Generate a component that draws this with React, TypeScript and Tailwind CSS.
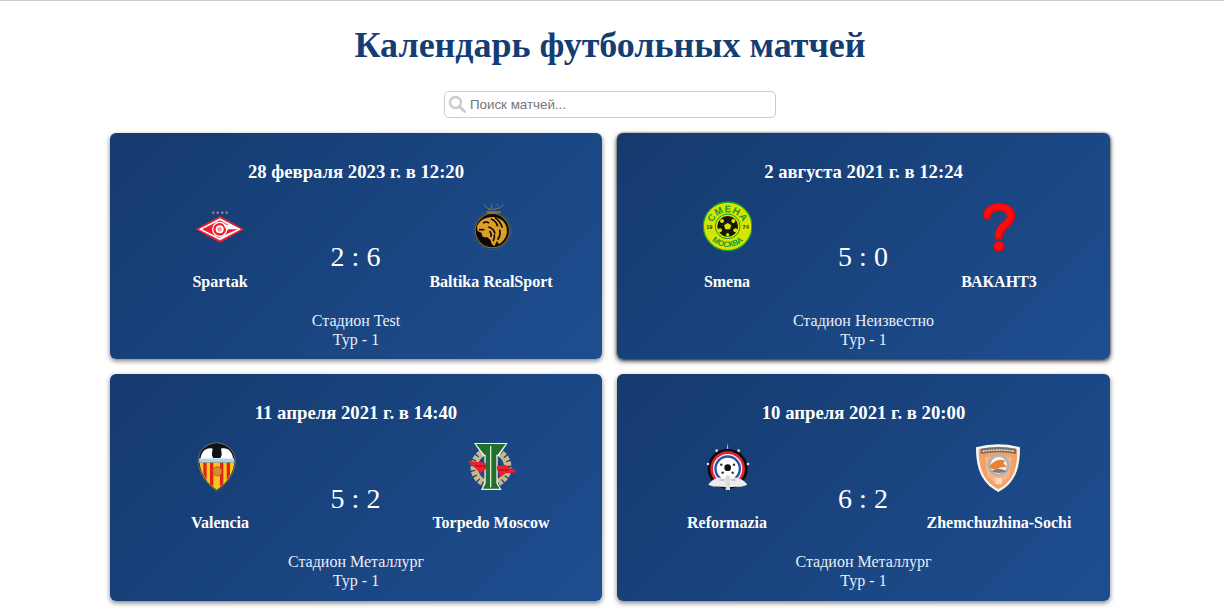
import { ReactNode } from "react";

const SpartakLogo = () => (
  <svg viewBox="45 18 150 150" className="w-[50px] h-[50px]">
    <g fill="#a89a80">
      <rect x="97" y="50" width="6" height="6" />
      <rect x="110" y="50" width="6" height="6" />
      <rect x="124" y="50" width="6" height="6" />
      <rect x="137" y="50" width="6" height="6" />
    </g>
    <polygon points="47,103 120,63 192,103 120,143" fill="#ee1c2e" />
    <polygon points="56,103 120,70 183,103 120,136" fill="#fff" />
    <polygon points="66,103 120,76 146,90 120,96 100,103 120,128 120,130" fill="#ee1c2e" />
    <polygon points="120,128 142,116 174,103 146,103 132,112" fill="#ee1c2e" />
    <circle cx="119" cy="103" r="23" fill="#fff" />
    <circle cx="119" cy="103" r="19" fill="#ee1c2e" />
    <circle cx="119" cy="103" r="12" fill="#fff" />
    <circle cx="119" cy="103" r="7" fill="#f39aa2" />
    <polygon points="128 84 172 103 136 100" fill="#fff" />
  </svg>
);

const BalticaLogo = () => (
  <svg viewBox="33 18 150 150" className="w-[50px] h-[50px]">
    <g fill="none" stroke="#a9812c" strokeWidth="2">
      <path d="M88 28 q4 12 16 14 M104 42 l6 -6 6 6 M110 36 v-10" />
      <path d="M120 42 q14 0 28 -14 M128 34 v-8" />
      <path d="M100 44 h24" />
    </g>
    <rect x="95" y="49" width="42" height="6" fill="#8f7a45" />
    <circle cx="112" cy="107" r="57" fill="none" stroke="#8f7430" strokeWidth="2" strokeDasharray="2 3" />
    <circle cx="112" cy="107" r="52" fill="#a87d25" />
    <circle cx="112" cy="107" r="50" fill="#0b0906" />
    <path
      d="M66 96 q4 -20 30 -28 q30 -8 50 12 q14 18 8 40 q-6 18 -22 28 l-6 -10 l-8 16 l-8 -8 l-4 -12 l-10 -8 q-8 2 -14 -2 l-2 -10 l-12 -6 z"
      fill="#dc9f27"
    />
    <g stroke="#0b0906" fill="none" strokeWidth="5">
      <path d="M84 84 q10 -6 18 0" />
      <path d="M108 72 q16 6 20 22 M120 68 q16 10 22 30 M100 96 q16 4 20 20" />
      <path d="M134 104 q4 16 -6 30 M118 118 q2 10 -4 20 M104 108 q6 8 4 18" />
      <path d="M72 104 h16" />
    </g>
  </svg>
);

const SmenaLogo = () => (
  <svg viewBox="36 18 150 150" className="w-[50px] h-[50px]">
    <defs>
      <path id="smena-top" d="M65 100 a48 48 0 0 1 96 0" />
      <path id="smena-bottom" d="M45 88 a68 68 0 0 0 136 0" />
    </defs>
    <circle cx="113" cy="94" r="73" fill="#d8e400" stroke="#149a38" strokeWidth="4" />
    <circle cx="113" cy="94" r="37" fill="#d8e400" stroke="#149a38" strokeWidth="3" />
    <text fontFamily="Liberation Sans, sans-serif" fontSize="29" fontWeight="700" fill="#149a38" textAnchor="middle" letterSpacing="2">
      <textPath href="#smena-top" startOffset="50%">СМЕНА</textPath>
    </text>
    <text fontFamily="Liberation Sans, sans-serif" fontSize="24" fontWeight="700" fill="#149a38" textAnchor="middle">
      <textPath href="#smena-bottom" startOffset="50%">МОСКВА</textPath>
    </text>
    <text x="58" y="102" fontFamily="Liberation Sans, sans-serif" fontSize="17" fontWeight="700" fill="#214a14" textAnchor="middle">19</text>
    <text x="167" y="102" fontFamily="Liberation Sans, sans-serif" fontSize="17" fontWeight="700" fill="#214a14" textAnchor="middle">74</text>
    <circle cx="113" cy="94" r="31" fill="#16160a" />
    <g fill="#d8e400">
      <polygon points="113,84 124,91 120,103 106,103 102,91" />
      <circle cx="96" cy="78" r="6" />
      <circle cx="130" cy="78" r="6" />
      <circle cx="90" cy="106" r="6" />
      <circle cx="136" cy="106" r="6" />
      <circle cx="113" cy="119" r="5" />
    </g>
  </svg>
);

const QuestionLogo = () => (
  <svg viewBox="42 18 150 150" className="w-[50px] h-[50px]">
    <path
      d="M81 62 C84 44 100 37 117 37 C140 37 153 48 153 63 C153 80 138 88 128 98 C121 106 117 114 116 124"
      fill="none"
      stroke="#d80808"
      strokeWidth="25"
      strokeLinecap="round"
    />
    <path
      d="M81 60 C84 43 100 35 117 35 C140 35 151 47 151 62 C151 78 136 86 126 96 C119 104 115 112 114 122"
      fill="none"
      stroke="#fb0d0d"
      strokeWidth="18"
      strokeLinecap="round"
    />
    <circle cx="117" cy="155" r="17" fill="#d80808" />
    <circle cx="116" cy="153" r="13" fill="#fb0d0d" />
  </svg>
);

const ValenciaLogo = () => (
  <svg viewBox="45 18 150 150" className="w-[50px] h-[50px]">
    <path d="M110 20 C70 24 54 50 55 78 C58 122 90 150 110 166 C130 150 164 122 166 78 C166 50 150 24 110 20 Z" fill="#111" stroke="#6a6e72" strokeWidth="3" />
    <path d="M62 66 C64 46 80 32 98 38 C96 50 94 58 100 66 Z" fill="#fff" />
    <path d="M159 66 C157 46 141 32 123 38 C125 50 127 58 121 66 Z" fill="#fff" />
    <path d="M58 66 H162 L164 80 H57 Z" fill="#a6d4ec" />
    <path d="M62 68 H158" stroke="#fff" strokeWidth="2" />
    <path d="M59 80 H163 C160 120 130 148 110 162 C90 148 61 120 59 80 Z" fill="#f7c71c" />
    <g fill="#e3231b">
      <path d="M70 80 H80 V132 Q74 124 70 114 Z" />
      <path d="M90 80 H100 V152 Q94 148 90 144 Z" />
      <path d="M120 80 H130 V144 Q126 148 120 152 Z" />
      <path d="M140 80 H150 V116 Q146 124 140 132 Z" />
    </g>
    <circle cx="112" cy="106" r="14" fill="#d98a2b" stroke="#8c5414" strokeWidth="2" />
  </svg>
);

const TorpedoLogo = () => (
  <svg viewBox="33 18 150 150" className="w-[50px] h-[50px]">
    <circle cx="108" cy="94" r="54" fill="none" stroke="#c9b98a" strokeWidth="15" strokeDasharray="12 4" />
    <circle cx="108" cy="94" r="44" fill="none" stroke="#c9b98a" strokeWidth="9" />
    <path d="M57 21 H158 L132 60 H128 V140 L140 162 H78 L88 140 V60 H84 Z" fill="#f2f2ea" />
    <path d="M63 24 H152 L128 56 H124 V142 L134 158 H84 L92 142 V56 H88 Z" fill="#236f2c" />
    <rect x="105" y="30" width="4" height="124" fill="#dfead6" />
    <path d="M36 74 L92 80 L94 98 L76 112 L58 94 Z" fill="#ee1f2e" />
    <path d="M124 92 L150 86 L190 108 L152 112 L136 124 Z" fill="#ee1f2e" />
    <path d="M60 90 h32 M128 102 h32" stroke="#8c1018" strokeWidth="3" />
  </svg>
);

const ReformaziaLogo = () => (
  <svg viewBox="36 18 150 150" className="w-[50px] h-[50px]">
    <polygon points="113,20 107,80 119,80" fill="#e8e8e8" />
    <circle cx="113" cy="98" r="60" fill="#0d0d0d" />
    <g fill="#ddd">
      <circle cx="80" cy="44" r="4" />
      <circle cx="146" cy="44" r="4" />
      <circle cx="54" cy="84" r="4" />
      <circle cx="174" cy="84" r="4" />
    </g>
    <circle cx="113" cy="98" r="52" fill="#e32430" />
    <circle cx="113" cy="98" r="44" fill="#f4f4f4" />
    <circle cx="113" cy="98" r="40" fill="#2b4fa8" />
    <circle cx="113" cy="98" r="33" fill="#fff" />
    <circle cx="113" cy="95" r="10" fill="#111" />
    <g fill="#222">
      <circle cx="94" cy="86" r="3.5" />
      <circle cx="132" cy="86" r="3.5" />
      <circle cx="98" cy="110" r="3.5" />
      <circle cx="128" cy="110" r="3.5" />
    </g>
    <path d="M55 146 C70 124 92 122 113 126 C134 122 156 124 172 146 C150 156 132 150 113 154 C94 150 76 156 55 146 Z" fill="#ececec" />
    <rect x="107" y="118" width="13" height="44" fill="#dcdcdc" />
    <path d="M88 132 h16 M123 132 h16" stroke="#8a8a8a" strokeWidth="2" />
  </svg>
);

const ZhemchuzhinaLogo = () => (
  <svg viewBox="42 18 150 150" className="w-[50px] h-[50px]">
    <path d="M48 34 Q115 16 180 34 C180 90 170 140 115 168 C60 140 48 90 48 34 Z" fill="#f8f6f2" />
    <path d="M56 40 Q115 26 172 40 C172 90 164 134 115 160 C66 134 56 90 56 40 Z" fill="#f2a066" />
    <path d="M62 38 Q115 28 168 38 L168 54 Q115 44 62 54 Z" fill="#7c6e62" />
    <path d="M68 46 Q115 38 162 46" stroke="#f1ebe4" strokeWidth="4" fill="none" strokeDasharray="6 2" />
    <path d="M74 62 L156 62 L148 122 L115 148 L82 122 Z" fill="#f6b489" />
    <circle cx="116" cy="88" r="33" fill="#b5b2ae" />
    <circle cx="116" cy="88" r="25" fill="#f7f5f1" />
    <path d="M88 92 Q108 64 136 74 L130 82 L142 94 Q124 90 112 100 Q100 104 88 92 Z" fill="#e8803a" />
    <path d="M94 106 Q116 92 140 106 Q118 116 94 106 Z" fill="#7c7c7c" />
    <rect x="106" y="126" width="20" height="18" fill="#f9d8bc" />
  </svg>
);

type Match = {
  date: string;
  home: string;
  away: string;
  homeLogo: ReactNode;
  awayLogo: ReactNode;
  score: string;
  stadium: string;
  hovered?: boolean;
};

const matches: Match[] = [
  {
    date: "28 февраля 2023 г. в 12:20",
    home: "Spartak",
    away: "Baltika RealSport",
    homeLogo: <SpartakLogo />,
    awayLogo: <BalticaLogo />,
    score: "2 : 6",
    stadium: "Стадион Test",
  },
  {
    date: "2 августа 2021 г. в 12:24",
    home: "Smena",
    away: "ВАКАНТ3",
    homeLogo: <SmenaLogo />,
    awayLogo: <QuestionLogo />,
    score: "5 : 0",
    stadium: "Стадион Неизвестно",
    hovered: true,
  },
  {
    date: "11 апреля 2021 г. в 14:40",
    home: "Valencia",
    away: "Torpedo Moscow",
    homeLogo: <ValenciaLogo />,
    awayLogo: <TorpedoLogo />,
    score: "5 : 2",
    stadium: "Стадион Металлург",
  },
  {
    date: "10 апреля 2021 г. в 20:00",
    home: "Reformazia",
    away: "Zhemchuzhina-Sochi",
    homeLogo: <ReformaziaLogo />,
    awayLogo: <ZhemchuzhinaLogo />,
    score: "6 : 2",
    stadium: "Стадион Металлург",
  },
];

function Team({ name, logo }: { name: string; logo: ReactNode }) {
  return (
    <div className="w-[160px] flex flex-col items-center">
      {logo}
      <div className="mt-[22px] text-[16px] leading-[18px] font-bold text-white">{name}</div>
    </div>
  );
}

function MatchCard({ match }: { match: Match }) {
  return (
    <div
      className={`h-[226.3px] rounded-[6px] bg-[linear-gradient(135deg,#153a6e,#1e4e90)] pt-[28px] text-center text-white ${
        match.hovered
          ? "shadow-[0_2px_5px_rgba(0,0,0,0.85),0_0_2px_rgba(0,0,0,0.5)]"
          : "shadow-[0_2px_5px_rgba(0,0,0,0.5)]"
      }`}
    >
      <div className="text-[18.72px] leading-[21px] font-bold">{match.date}</div>
      <div className="mt-[19px] pl-[30px] pr-[31px] flex justify-between">
        <Team name={match.home} logo={match.homeLogo} />
        <div className="mt-[40.3px] text-[28px] leading-[32px]">{match.score}</div>
        <Team name={match.away} logo={match.awayLogo} />
      </div>
      <div className="mt-[20px] text-[16px] leading-[19px] text-[#e8eef7]">
        <div>{match.stadium}</div>
        <div>Тур - 1</div>
      </div>
    </div>
  );
}

export default function App() {
  return (
    <main className="min-h-screen bg-white border-t border-[#cccccc] pr-[4px] font-['Liberation_Serif',serif]">
      <h1 className="mt-[24px] text-center text-[36px] leading-[41px] font-bold text-[#143d73]">
        Календарь футбольных матчей
      </h1>
      <div className="mt-[25px] flex justify-center">
        <div className="relative w-[332px]">
          <svg viewBox="0 0 18 18" className="absolute left-[4px] top-[4px] w-[18px] h-[18px]">
            <circle cx="7.5" cy="7.5" r="5.5" fill="none" stroke="#cccccc" strokeWidth="2.4" />
            <path d="M11.5 11.5 L16.5 16.5" stroke="#cccccc" strokeWidth="3" strokeLinecap="round" />
          </svg>
          <input
            type="text"
            placeholder="Поиск матчей..."
            className="w-full h-[27px] pl-[25px] pr-2 border border-[#cccccc] rounded-[5px] text-[13.33px] font-['Liberation_Sans',sans-serif] placeholder:text-[#757575] outline-none"
          />
        </div>
      </div>
      <div className="mt-[15px] ml-[110px] grid grid-cols-[492px_493px] gap-[15px]">
        {matches.map((m) => (
          <MatchCard key={m.date} match={m} />
        ))}
      </div>
    </main>
  );
}
